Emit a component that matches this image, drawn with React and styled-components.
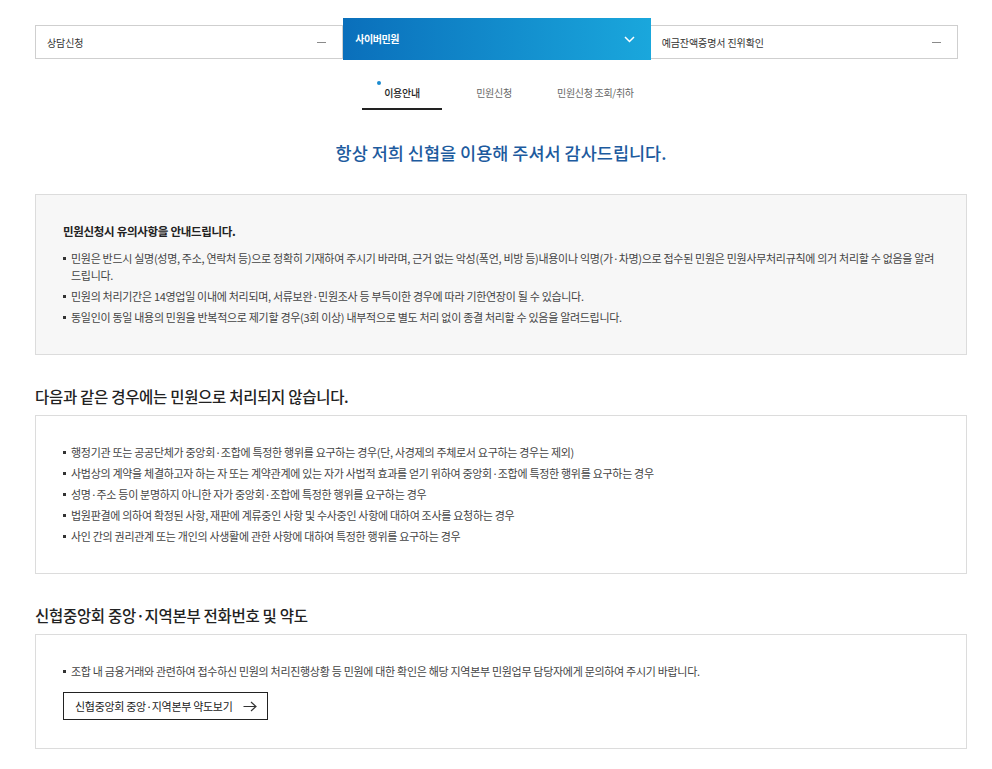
import React from 'react';
import styled, { createGlobalStyle } from 'styled-components';

const GlobalStyle = createGlobalStyle`
  html, body {
    margin: 0;
    padding: 0;
    background: #fff;
  }
  body {
    font-family: "Noto Sans CJK KR", "Noto Sans", sans-serif;
    color: #444;
    -webkit-font-smoothing: antialiased;
  }
  ul {
    margin: 0;
    padding: 0;
    list-style: none;
  }
`;

const Page = styled.div`
  width: 932px;
  padding: 18px 25px 20px 35px;
`;

const Nav = styled.nav`
  display: flex;
  align-items: flex-end;
  width: 923px;
`;

const NavItem = styled.div`
  flex: 1;
  display: flex;
  align-items: center;
  justify-content: space-between;
  box-sizing: border-box;
  height: ${p => (p.active ? '42px' : '34px')};
  margin-bottom: ${p => (p.active ? '0' : '1px')};
  padding: 0 16px 0 ${p => (p.active ? '12px' : '11px')};
  border: ${p => (p.active ? 'none' : '1px solid #cfcfcf')};
  border-left: ${p => (p.first || p.active ? undefined : 'none')};
  background: ${p =>
    p.active ? 'linear-gradient(90deg, #0a6fbb 0%, #1aa7dc 100%)' : '#fff'};
  color: ${p => (p.active ? '#fff' : '#333')};
  font-size: 10px;
  font-weight: ${p => (p.active ? 700 : 400)};
  letter-spacing: ${p => (p.active ? '-0.5px' : '-0.1px')};
`;

const NavLabel = styled.span`
  padding-bottom: ${p => (p.active ? '1px' : '0')};
`;

const Minus = styled.span`
  width: 9px;
  height: 1px;
  background: #8a8a8a;
`;

const Tabs = styled.ul`
  display: flex;
  gap: 12px;
  margin-left: 327px !important;
`;

const Tab = styled.li`
  position: relative;
  min-width: 80px;
  box-sizing: border-box;
  padding: 25px 11px 7px;
  text-align: center;
  font-size: 10px;
  line-height: 16px;
  letter-spacing: -0.3px;
  color: ${p => (p.active ? '#222' : '#666')};
  font-weight: ${p => (p.active ? 500 : 400)};
  border-bottom: 2px solid ${p => (p.active ? '#222' : 'transparent')};
`;

const Dot = styled.span`
  position: absolute;
  top: 21px;
  left: 15px;
  width: 4px;
  height: 4px;
  border-radius: 50%;
  background: #1a8bd0;
`;

const Greeting = styled.h2`
  margin: 31px 0 29px;
  text-align: center;
  font-size: 17.5px;
  line-height: 24px;
  font-weight: 500;
  letter-spacing: 0;
  color: #1d5b9e;
`;

const Box = styled.section`
  border: 1px solid #dcdcdc;
  background: ${p => (p.gray ? '#f7f7f7' : '#fff')};
  padding: 28px 27px;
`;

const BoxTitle = styled.h3`
  margin: 0 0 10px;
  font-size: 11.5px;
  line-height: 17px;
  font-weight: 700;
  letter-spacing: -0.3px;
  color: #222;
`;

const List = styled.ul`
  display: flex;
  flex-direction: column;
  gap: ${p => p.gap || 4}px;
`;

const Item = styled.li`
  position: relative;
  padding-left: 8px;
  font-size: 11px;
  line-height: 17px;
  letter-spacing: -0.3px;
  color: #444;

  &::before {
    content: '';
    position: absolute;
    left: 0;
    top: 7px;
    width: 3px;
    height: 3px;
    background: #333;
  }
`;

const SectionTitle = styled.h3`
  margin: 30px 0 8px;
  font-size: 15.5px;
  line-height: 22px;
  font-weight: 500;
  letter-spacing: -0.3px;
  color: #222;
`;

const LinkButton = styled.a`
  display: inline-flex;
  align-items: center;
  gap: 10px;
  box-sizing: border-box;
  height: 28px;
  margin-top: 12px;
  padding: 0 10px 0 11px;
  border: 1px solid #222;
  font-size: 11px;
  letter-spacing: -0.3px;
  color: #222;
  text-decoration: none;
  cursor: pointer;
`;

const Chevron = () => (
  <svg width="11" height="7" viewBox="0 0 11 7" fill="none">
    <path d="M1 1l4.5 4.5L10 1" stroke="#fff" strokeWidth="1.5" />
  </svg>
);

const Arrow = () => (
  <svg width="14" height="11" viewBox="0 0 14 11" fill="none">
    <path d="M0.5 5.5h12.5M8 1l5 4.5L8 10" stroke="#333" strokeWidth="1.2" />
  </svg>
);

const notices = [
  '민원은 반드시 실명(성명, 주소, 연락처 등)으로 정확히 기재하여 주시기 바라며, 근거 없는 악성(폭언, 비방 등)내용이나 익명(가·차명)으로 접수된 민원은 민원사무처리규칙에 의거 처리할 수 없음을 알려드립니다.',
  '민원의 처리기간은 14영업일 이내에 처리되며, 서류보완·민원조사 등 부득이한 경우에 따라 기한연장이 될 수 있습니다.',
  '동일인이 동일 내용의 민원을 반복적으로 제기할 경우(3회 이상) 내부적으로 별도 처리 없이 종결 처리할 수 있음을 알려드립니다.',
];

const exclusions = [
  '행정기관 또는 공공단체가 중앙회·조합에 특정한 행위를 요구하는 경우(단, 사경제의 주체로서 요구하는 경우는 제외)',
  '사법상의 계약을 체결하고자 하는 자 또는 계약관계에 있는 자가 사법적 효과를 얻기 위하여 중앙회·조합에 특정한 행위를 요구하는 경우',
  '성명·주소 등이 분명하지 아니한 자가 중앙회·조합에 특정한 행위를 요구하는 경우',
  '법원판결에 의하여 확정된 사항, 재판에 계류중인 사항 및 수사중인 사항에 대하여 조사를 요청하는 경우',
  '사인 간의 권리관계 또는 개인의 사생활에 관한 사항에 대하여 특정한 행위를 요구하는 경우',
];

export default function App() {
  return (
    <>
      <GlobalStyle />
      <Page>
        <Nav>
          <NavItem first>
            <NavLabel>상담신청</NavLabel>
            <Minus />
          </NavItem>
          <NavItem active>
            <NavLabel active>사이버민원</NavLabel>
            <Chevron />
          </NavItem>
          <NavItem>
            <NavLabel>예금잔액증명서 진위확인</NavLabel>
            <Minus />
          </NavItem>
        </Nav>

        <Tabs>
          <Tab active>
            <Dot />
            이용안내
          </Tab>
          <Tab>민원신청</Tab>
          <Tab>민원신청 조회/취하</Tab>
        </Tabs>

        <Greeting>항상 저희 신협을 이용해 주셔서 감사드립니다.</Greeting>

        <Box gray>
          <BoxTitle>민원신청시 유의사항을 안내드립니다.</BoxTitle>
          <List gap={4}>
            {notices.map(text => (
              <Item key={text}>{text}</Item>
            ))}
          </List>
        </Box>

        <SectionTitle>다음과 같은 경우에는 민원으로 처리되지 않습니다.</SectionTitle>
        <Box>
          <List gap={4}>
            {exclusions.map(text => (
              <Item key={text}>{text}</Item>
            ))}
          </List>
        </Box>

        <SectionTitle>신협중앙회 중앙·지역본부 전화번호 및 약도</SectionTitle>
        <Box>
          <List>
            <Item>
              조합 내 금융거래와 관련하여 접수하신 민원의 처리진행상황 등 민원에 대한 확인은 해당 지역본부 민원업무 담당자에게 문의하여 주시기 바랍니다.
            </Item>
          </List>
          <LinkButton>
            신협중앙회 중앙·지역본부 약도보기
            <Arrow />
          </LinkButton>
        </Box>
      </Page>
    </>
  );
}
